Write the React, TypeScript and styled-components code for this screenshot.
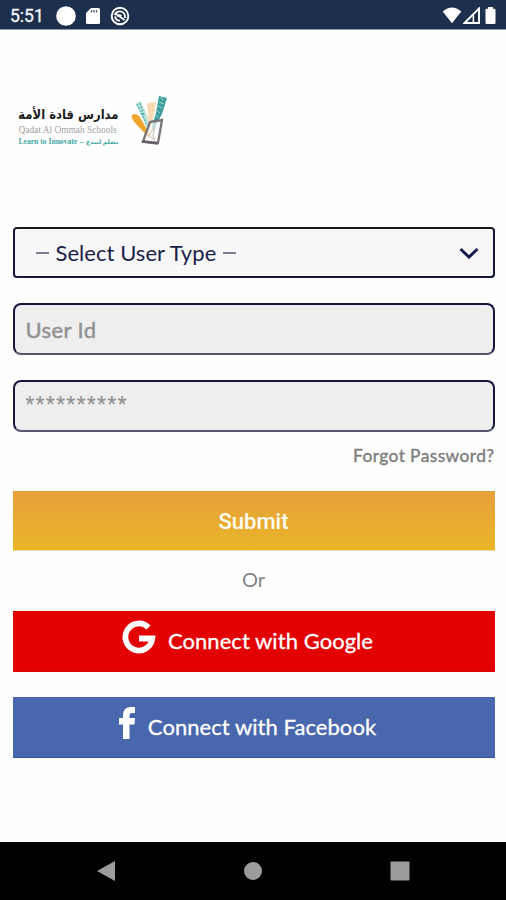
import React from "react";
import styled, { createGlobalStyle } from "styled-components";

const GlobalStyle = createGlobalStyle`
  *, *::before, *::after { box-sizing: border-box; }
  body { margin: 0; background: #fefefe; }
  button, input { font: inherit; border-radius: 0; }
`;

const Screen = styled.div`
  width: 506px;
  height: 900px;
  display: flex;
  flex-direction: column;
  overflow: hidden;
  background: #fefefe;
  font-family: Lato, "Open Sans", sans-serif;
`;

const StatusBar = styled.header`
  flex: none;
  height: 30px;
  display: flex;
  align-items: center;
  justify-content: space-between;
  padding: 2px 7px 0 10px;
  background: #1c2f4d;
  border-bottom: 1px solid #8d98a8;
`;

const StatusGroup = styled.div<{ $gap: number }>`
  display: flex;
  align-items: center;
  gap: ${(p) => p.$gap}px;
`;

const Clock = styled.span`
  width: 36px;
  margin-right: 1px;
  font: 400 17.5px/20px Roboto, sans-serif;
  -webkit-text-stroke: 0.3px currentColor;
  color: #f4f6f9;
`;

const Icon = styled.svg`
  display: block;
  flex: none;
`;

const Main = styled.main`
  flex: 1;
  display: flex;
  flex-direction: column;
  padding: 64px 11.5px 0 12.5px;
`;

const Logo = styled.div`
  display: flex;
  align-items: flex-start;
  height: 54px;
  margin-bottom: 79px;
  padding-left: 6px;
`;

const LogoText = styled.div`
  width: 100px;
  padding-top: 10px;
  display: flex;
  flex-direction: column;
`;

const ArabicName = styled.div`
  font: 700 11.6px/21px "DejaVu Sans", sans-serif;
  color: #1d1d1d;
  direction: rtl;
  white-space: nowrap;
  transform: scaleY(1.15);
`;

const EnglishName = styled.div`
  font: 9.4px/11px "Liberation Serif", serif;
  color: #a3a3a3;
  white-space: nowrap;
`;

const Tagline = styled.div`
  display: flex;
  justify-content: space-between;
  font: 700 7.6px/11px "Liberation Serif", "DejaVu Sans", serif;
  color: #43a9a6;
  white-space: nowrap;
`;

const TaglineArabic = styled.span`
  font-size: 6.2px;
`;

const Field = styled.div`
  height: 52px;
  margin-bottom: 25px;
`;

const SelectField = styled(Field)`
  margin-bottom: 24px;
`;

const SelectButton = styled.button`
  width: 100%;
  height: 51px;
  display: flex;
  align-items: center;
  justify-content: space-between;
  padding: 1px 14px 0 21px;
  color: #1b1e4b;
  background: #f7f7f7;
  border: 2px solid #14163c;
  border-top-color: #17181f;
  border-radius: 4px;
`;

const SelectLabel = styled.span`
  display: flex;
  align-items: center;
  gap: 7px;
  font-size: 22px;
  line-height: 28px;
  letter-spacing: 0.05px;
`;

const TextInput = styled.input<{ $masked?: boolean }>`
  display: block;
  width: 100%;
  height: 52px;
  padding: ${(p) => (p.$masked ? "0 11px 4px" : "0 11px")};
  font-family: ${(p) => (p.$masked ? "Roboto" : "Lato")}, sans-serif;
  font-size: ${(p) => (p.$masked ? 20 : 22)}px;
  font-weight: 400;
  letter-spacing: ${(p) => (p.$masked ? 1.65 : 0.4)}px;
  background: #eeeeee;
  border: 2px solid #14163f;
  border-bottom-color: #54566f;
  border-radius: 8px;
  outline: 0;
  &::placeholder {
    color: #929292;
    opacity: 1;
    -webkit-text-stroke: ${(p) => (p.$masked ? 0.2 : 0.5)}px currentColor;
  }
`;

const ForgotLink = styled.a`
  align-self: flex-end;
  margin-top: -13px;
  height: 24px;
  font-size: 17.4px;
  line-height: 24px;
  letter-spacing: 0.4px;
  -webkit-text-stroke: 0.4px currentColor;
  color: #7d7d7d;
`;

const SubmitButton = styled.button`
  height: 60px;
  margin-top: 23px;
  padding: 3px 0 0;
  border: 0;
  border-bottom: 1px solid #e2dcc9;
  font: 500 22px/28px Roboto, sans-serif;
  color: #fffdf5;
  background: linear-gradient(#e6a03b, #eab42a 95%, #efb90c) padding-box;
`;

const Or = styled.div`
  height: 60px;
  text-align: center;
  font-size: 20px;
  line-height: 57px;
  color: #858585;
`;

const SocialButton = styled.button<{ $color: string; $edge: string }>`
  height: 61px;
  margin-bottom: 25px;
  padding: 0 12px 0 0;
  display: flex;
  align-items: center;
  justify-content: center;
  gap: 12px;
  border: 0;
  border-bottom: 1px solid ${(p) => p.$edge};
  background: ${(p) => p.$color};
  color: #fff;
`;

const SocialLabel = styled.span`
  font-size: 22px;
  line-height: 28px;
  letter-spacing: 0.05px;
  -webkit-text-stroke: 0.3px currentColor;
`;

const RaisedIcon = styled(Icon)`
  margin-bottom: 8px;
`;

const NavBar = styled.nav`
  flex: none;
  height: 58px;
  display: flex;
  justify-content: space-between;
  align-items: center;
  padding: 0 96px;
  background: #000;
`;

export default function App() {
  return (
    <Screen>
      <GlobalStyle />
      <StatusBar>
        <StatusGroup $gap={9}>
          <Clock>5:51</Clock>
          <Icon width="20" height="20" viewBox="0 0 20 20"><circle cx="10" cy="10" r="9.8" fill="#fff" /></Icon>
          <Icon width="16" height="18" viewBox="0 0 16 18">
            <path d="M6 1h7.500q1.500 0 1.500 1.500v13q0 1.500-1.500 1.500h-11Q1 17 1 15.500V6z" fill="#fff" />
            <path d="M6.500 3v2.500M9 3v2.500M11.500 3v2.500" stroke="#53617a" strokeWidth="1.300" />
          </Icon>
          <Icon width="20" height="20" viewBox="0 0 20 20" fill="none" stroke="#fff">
            <circle cx="10" cy="10" r="8.300" strokeWidth="1.900" />
            <path d="M4.500 9Q7 4.500 11 5.500Q15.500 7 15 12M5 10.500Q6 15 10 14.500M5.500 7.500l9 6.500M7 10.500q2-2.500 4.500-.5" strokeWidth="1.800" />
          </Icon>
        </StatusGroup>
        <StatusGroup $gap={1}>
          <Icon width="20" height="17" viewBox="0 0 20 17">
            <path d="M.7 4.600Q10-3.500 19.300 4.600L10 16.300z" fill="#fff" />
          </Icon>
          <Icon width="18" height="17" viewBox="0 0 18 17">
            <path d="M1.500 16L16 1.500V16z" fill="none" stroke="#fff" strokeWidth="1.900" />
            <path d="M10.500 7.500V16" stroke="#fff" strokeWidth="1.800" />
            <path d="M12.500 7v7.500" stroke="#17233b" strokeWidth="2" />
          </Icon>
          <Icon width="17" height="17" viewBox="3 0 17 17">
            <path d="M9 0h5v1.700h1.500q1 0 1 1V16q0 1-1 1H7.500q-1 0-1-1V2.700q0-1 1-1H9z" fill="#fff" />
          </Icon>
        </StatusGroup>
      </StatusBar>

      <Main>
        <Logo>
          <LogoText>
            <ArabicName>مدارس قادة الأمة</ArabicName>
            <EnglishName>Qadat Al Ommah Schools</EnglishName>
            <Tagline><span>Learn to Innovate</span><span>–</span><TaglineArabic>نتعلم لنبدع</TaglineArabic></Tagline>
          </LogoText>
          <Icon width="50" height="54" viewBox="118 94 50 54">
            <path d="M130.500 117q0-3 4-3 3 1 5 4l9 16v4q-11-11-16-17z" fill="#f2a52c" />
            <path d="M134.500 104l5-3q5 9 8 20l2 10-4-6q-6-12-11-21z" fill="#b9dfdc" />
            <path d="M136 104l4 8m-1-9 4 12m-2-2 5 14m-6-14 4 8" stroke="#57b4ae" strokeWidth="1.300" strokeDasharray="2 1.500" />
            <path d="M146 103l9-1-3 17-2 12-3-10z" fill="#f9ddb8" />
            <path d="M148 105l6 1m-6 4 5 1m-4 4 3 1" stroke="#f7cc98" strokeWidth="1.500" strokeDasharray="2 1" />
            <path d="M158 96l8 2-5 16-9 16-1-4 4-13z" fill="#3d9d9b" />
            <path d="M160 97l2 3m-4 2 5 2m-6 2 4 2m-5 3 3 2m-5 2 3 2" stroke="#a9d9d4" strokeWidth="1" />
            <path d="M149 122l12-2-4 23-15-1.500z" fill="#fefefe" fillOpacity=".65" stroke="#77747a" strokeWidth="2.300" />
            <path d="M147 137l7-11-2 10 2 4-5-3" fill="#faf4e8" stroke="#c5bfbb" strokeWidth="1" />
            <path d="M141 141.500l16 2" stroke="#656067" strokeWidth="2.400" />
          </Icon>
        </Logo>

        <SelectField>
          <SelectButton type="button">
            <SelectLabel>
              <Icon width="13" height="2" viewBox="0 0 13 2"><path d="M0 1h13" stroke="#53556f" strokeWidth="1.500" /></Icon>
              Select User Type
              <Icon width="13" height="2" viewBox="0 0 13 2"><path d="M0 1h13" stroke="#53556f" strokeWidth="1.500" /></Icon>
            </SelectLabel>
            <Icon width="20" height="12" viewBox="0 0 20 12" fill="none" stroke="#14194b" strokeWidth="3">
              <path d="M1.500 2L10 10l8.500-8" />
            </Icon>
          </SelectButton>
        </SelectField>
        <Field><TextInput placeholder="User Id" /></Field>
        <Field><TextInput $masked placeholder="**********" /></Field>
        <ForgotLink>Forgot Password?</ForgotLink>
        <SubmitButton type="button">Submit</SubmitButton>
        <Or>Or</Or>
        <SocialButton type="button" $color="#e30000" $edge="#d50000">
          <RaisedIcon width="34" height="34" viewBox="0 0 34 34" fill="none" stroke="#fff" strokeWidth="5.800">
            <path d="M26.500 7.500A13.500 13.500 0 1 0 30.300 18.500H17" />
          </RaisedIcon>
          <SocialLabel>Connect with Google</SocialLabel>
        </SocialButton>
        <SocialButton type="button" $color="#4867ad" $edge="#2f539f">
          <RaisedIcon width="17" height="32" viewBox="0 0 17 32">
            <path d="M4 32V17.500H0V11h4V8.500Q4 0 12 0h4v6h-3q-2.500 0-2.500 2.500V11H16l-.5 6.500h-5V32z" fill="#fff" />
          </RaisedIcon>
          <SocialLabel>Connect with Facebook</SocialLabel>
        </SocialButton>
      </Main>

      <NavBar>
        <Icon width="20" height="22" viewBox="0 0 20 22"><path d="M1 11L19 1v20z" fill="#9c9c9c" /></Icon>
        <Icon width="20" height="20" viewBox="0 0 20 20"><circle cx="10" cy="10" r="9" fill="#9c9c9c" /></Icon>
        <Icon width="20" height="20" viewBox="0 0 20 20"><rect x=".5" y=".5" width="19" height="19" rx="1" fill="#9c9c9c" /></Icon>
      </NavBar>
    </Screen>
  );
}
